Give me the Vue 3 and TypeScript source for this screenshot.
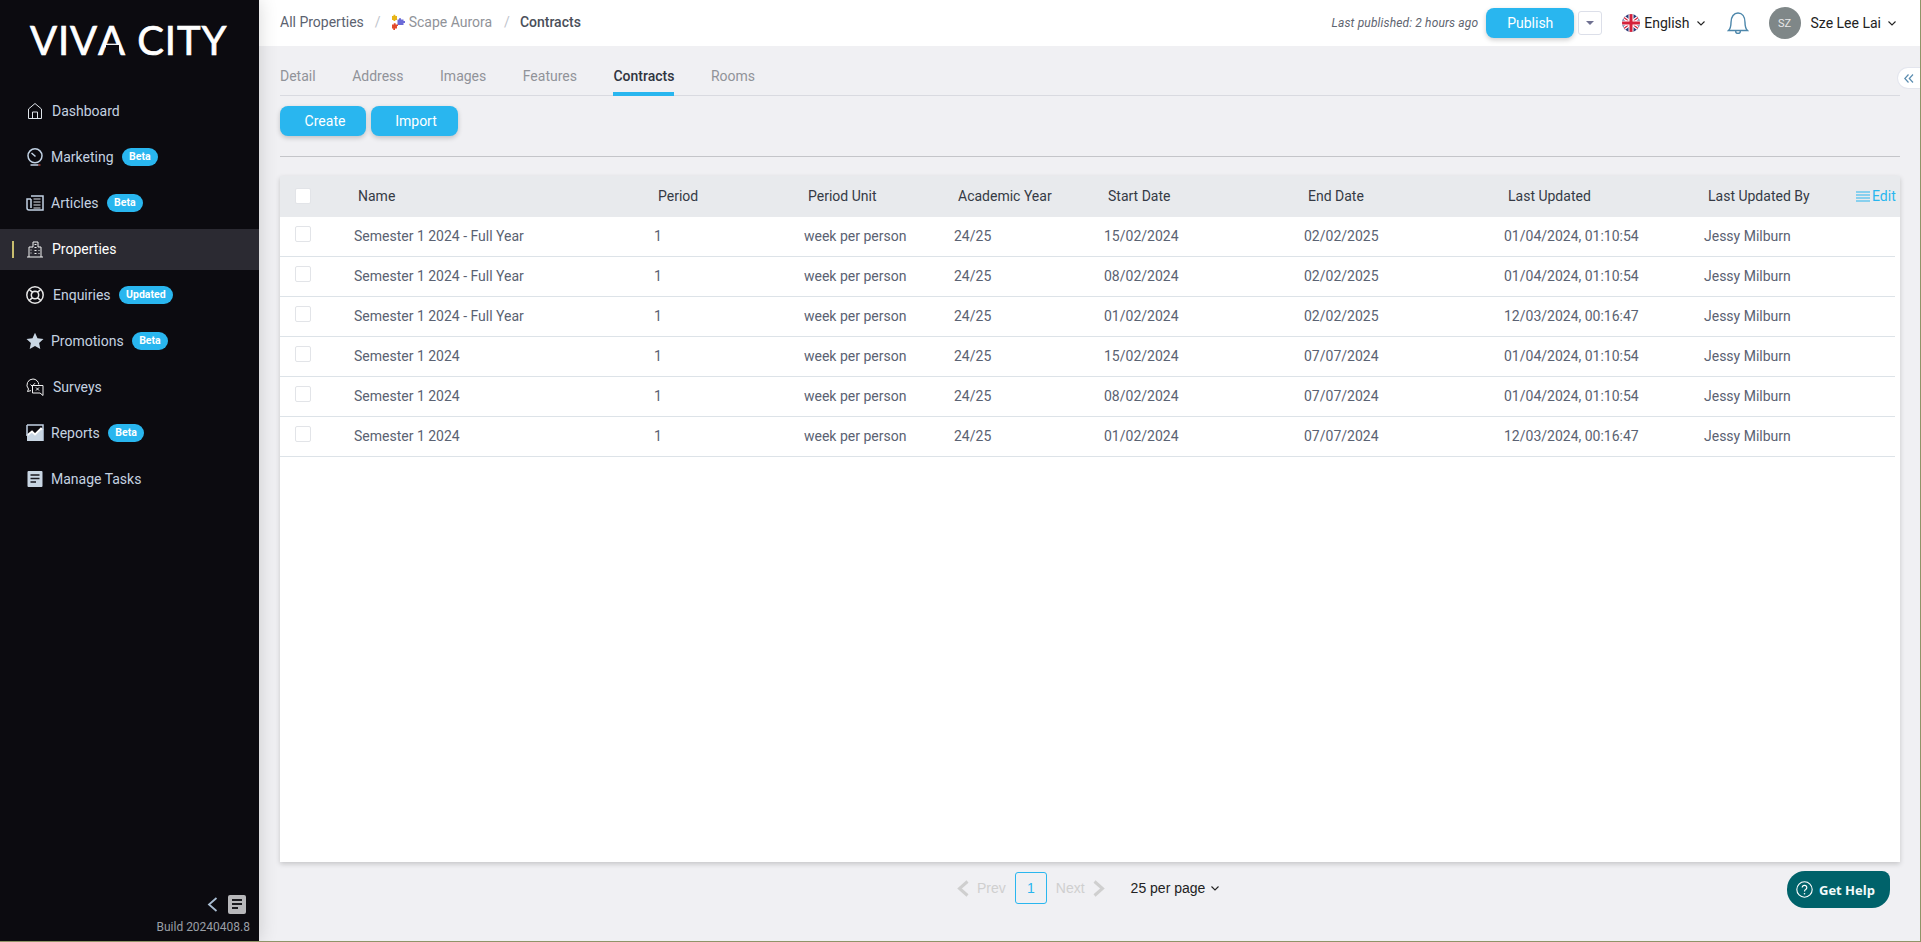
<script setup lang="ts">
interface Part { d: string; c: string }
interface NavItem { label: string; badge?: string; active?: boolean; textOffset: number; parts: Part[] }

const nav: NavItem[] = [
  { label: 'Dashboard', textOffset: 8, parts: [{ c: 's', d: 'M2.5 16.5V7L9 1.5 15.5 7v9.5zM6.5 16.5V10h5v6.5' }] },
  { label: 'Marketing', badge: 'Beta', textOffset: 7, parts: [
    { c: 's2', d: 'M9 .8a7 7 0 1 0 0 14 7 7 0 0 0 0-14zM9.500 8.500 5.500 5M4.500 17h8' },
    { c: 'r', d: 'M12.500 17h2' }] },
  { label: 'Articles', badge: 'Beta', textOffset: 7, parts: [
    { c: 's2', d: 'M5 2h12v14H3a2 2 0 0 1-2-2V5h4M5 5v9' },
    { c: 's', d: 'M7.5 5h7M7.5 8h7M7.5 11h7M7.5 14h7' }] },
  { label: 'Properties', active: true, textOffset: 8, parts: [
    { c: 'w', d: 'M1 17h16M3 17V7h4V2h5v5h3v10M8.5 4.5h2M8.5 7.5h2M4.5 10h1M4.5 13h1M8.5 10.5h2M8.5 13.500h2M12.500 10.500h1M12.500 13.500h1' }] },
  { label: 'Enquiries', badge: 'Updated', textOffset: 9, parts: [
    { c: 'w2', d: 'M9 .8a8.200 8.200 0 1 0 0 16.400A8.200 8.200 0 0 0 9 .8zM9 5.300a3.700 3.700 0 1 0 0 7.400 3.700 3.700 0 0 0 0-7.400zM3.200 3.200l3.200 3.200M14.800 3.200l-3.200 3.200M3.200 14.800l3.200-3.200M14.800 14.800l-3.200-3.200' }] },
  { label: 'Promotions', badge: 'Beta', textOffset: 7, parts: [
    { c: 'f', d: 'M9 .8l2.500 5.500 6 .7-4.400 4 1.200 6L9 14l-5.300 3 1.200-6L.5 7l6-.7z' }] },
  { label: 'Surveys', textOffset: 9, parts: [
    { c: 'w', d: 'M7 1a6 6 0 0 0-4.500 10L1.500 13.500 5 12.600M12.800 6.500A6 6 0 0 0 7 1M6.500 7.500h10.500v10l-3-2.500H6.500zM4.500 6.500l1.700 1.700 2.800-3M10 9.500l3 3M13 9.500l-3 3' }] },
  { label: 'Reports', badge: 'Beta', textOffset: 7, parts: [
    { c: 'f', d: 'M1 17V12l5-4 3 3 6-6 2 1.500V17z' },
    { c: 'l', d: 'M1 11.500l5-4 3 3 6-6 2 1.500' },
    { c: 's2', d: 'M1 12V1M1 1h16v16' }] },
  { label: 'Manage Tasks', textOffset: 7, parts: [
    { c: 'f', d: 'M2.500 1h13a1 1 0 0 1 1 1v14a1 1 0 0 1-1 1h-13a1 1 0 0 1-1-1V2a1 1 0 0 1 1-1z' },
    { c: 'd', d: 'M4.500 5h9M4.500 8.500h9M4.500 12h5.500' }] },
]

const tabs = ['Detail', 'Address', 'Images', 'Features', 'Contracts', 'Rooms']
const columns = ['Name', 'Period', 'Period Unit', 'Academic Year', 'Start Date', 'End Date', 'Last Updated', 'Last Updated By']
const rows: string[][] = [
  ['Semester 1 2024 - Full Year', '1', 'week per person', '24/25', '15/02/2024', '02/02/2025', '01/04/2024, 01:10:54', 'Jessy Milburn'],
  ['Semester 1 2024 - Full Year', '1', 'week per person', '24/25', '08/02/2024', '02/02/2025', '01/04/2024, 01:10:54', 'Jessy Milburn'],
  ['Semester 1 2024 - Full Year', '1', 'week per person', '24/25', '01/02/2024', '02/02/2025', '12/03/2024, 00:16:47', 'Jessy Milburn'],
  ['Semester 1 2024', '1', 'week per person', '24/25', '15/02/2024', '07/07/2024', '01/04/2024, 01:10:54', 'Jessy Milburn'],
  ['Semester 1 2024', '1', 'week per person', '24/25', '08/02/2024', '07/07/2024', '01/04/2024, 01:10:54', 'Jessy Milburn'],
  ['Semester 1 2024', '1', 'week per person', '24/25', '01/02/2024', '07/07/2024', '12/03/2024, 00:16:47', 'Jessy Milburn'],
]
</script>

<template>
  <div class="app">
    <aside class="sidebar">
      <div class="logo"><span class="logo-text">VIV<span class="logo-a">A</span> CITY</span></div>
      <nav class="nav">
        <a v-for="item in nav" :key="item.label" class="nav-item" :class="{ active: item.active }">
          <span class="nav-icon">
            <svg width="18" height="18" viewBox="0 0 18 18">
              <path v-for="(p, i) in item.parts" :key="i" :d="p.d" :class="p.c" />
            </svg>
          </span>
          <span class="nav-label" :style="{ marginLeft: item.textOffset + 'px' }">{{ item.label }}</span>
          <span v-if="item.badge" class="badge">{{ item.badge }}</span>
        </a>
      </nav>
      <div class="side-foot">
        <div class="foot-icons">
          <svg width="11" height="15" viewBox="0 0 11 15"><path d="M9.500 1 2 7.500 9.500 14" fill="none" stroke="#a9bdd2" stroke-width="1.800" /></svg>
          <svg width="18" height="19" viewBox="0 0 18 19">
            <rect width="18" height="19" rx="2" fill="#b7b7ba" />
            <path d="M4 5h10M4 9h10M4 13h6" stroke="#1a1a1e" stroke-width="2" />
          </svg>
        </div>
        <div class="build">Build 20240408.8</div>
      </div>
    </aside>

    <main class="main">
      <header class="topbar">
        <div class="crumbs">
          <span class="crumb-first">All Properties</span>
          <span class="slash">/</span>
          <svg class="puzzle" width="15" height="16" viewBox="0 0 15 16">
            <path d="M2 2h1.500V.8h1.800V2H7v4H5.300v1H3.500V6H2z" fill="#e8b518" />
            <path d="M7.500 5.500H9V4.200h2V5.500h2.500V7H15v2h-1.500v2H7.500z" fill="#6b6bd8" />
            <path d="M2 10.500h1.800V9.300h1.800v1.200H8V12H7v2.500H5V16H3.300v-1.500H2z" fill="#e2492b" />
          </svg>
          <span class="crumb-mid">Scape Aurora</span>
          <span class="slash second">/</span>
          <span class="crumb-last">Contracts</span>
        </div>
        <div class="top-right">
          <span class="published">Last published: 2 hours ago</span>
          <button class="btn publish">Publish</button>
          <span class="drop"><i class="caret"></i></span>
          <svg class="flag" width="18" height="18" viewBox="0 0 18 18">
            <defs><clipPath id="flagclip"><circle cx="9" cy="9" r="9" /></clipPath></defs>
            <g clip-path="url(#flagclip)">
              <rect width="18" height="18" fill="#2b3a78" />
              <path d="M0 2 18 16M18 2 0 16" stroke="#fff" stroke-width="3.500" />
              <path d="M0 2 18 16M18 2 0 16" stroke="#d5213b" stroke-width="1.200" />
              <path d="M9 0v18M0 9h18" stroke="#fff" stroke-width="5" />
              <path d="M9 0v18M0 9h18" stroke="#d5213b" stroke-width="3" />
            </g>
          </svg>
          <span class="lang">English</span>
          <svg class="chev" width="8" height="5" viewBox="0 0 8 5"><path d="M.5.5 4 4 7.500.5" fill="none" stroke="#222" stroke-width="1.100" /></svg>
          <svg class="bell" width="22" height="22" viewBox="0 0 22 22">
            <path d="M1.500 18.500c2-2 2.500-4 2.500-8C4 4.500 7 1 11 1s7 3.500 7 9.500c0 4 .5 6 2.500 8zM8.500 18.500c0 2 1 3 2.500 3s2.500-1 2.500-3" fill="none" stroke="#4d87ab" stroke-width="1.400" />
          </svg>
          <span class="avatar">SZ</span>
          <span class="user">Sze Lee Lai</span>
          <svg class="chev last" width="8" height="5" viewBox="0 0 8 5"><path d="M.5.5 4 4 7.500.5" fill="none" stroke="#222" stroke-width="1.100" /></svg>
        </div>
      </header>

      <section class="content">
        <div class="tabs">
          <span v-for="t in tabs" :key="t" class="tab" :class="{ current: t === 'Contracts' }">{{ t }}</span>
        </div>
        <div class="actions">
          <button class="btn action create">Create</button>
          <button class="btn action import">Import</button>
        </div>
        <div class="rule"></div>
        <div class="card">
          <div class="thead">
            <span class="check head-check"></span>
            <span v-for="c in columns" :key="c" class="th">{{ c }}</span>
            <span class="edit">
              <svg width="14" height="11" viewBox="0 0 14 11"><path d="M0 1h14M0 4h14M0 7h14M0 10h14" stroke="#29b6ef" stroke-width="1.200" /></svg>
              Edit
            </span>
          </div>
          <div v-for="(r, i) in rows" :key="i" class="row">
            <span class="check"></span>
            <span v-for="(v, j) in r" :key="j" class="td">{{ v }}</span>
          </div>
        </div>
        <div class="pager">
          <svg width="12" height="17" viewBox="0 0 12 17"><path d="M10.500 1.500 2.500 8.500l8 7" fill="none" stroke="#cfcfcf" stroke-width="3" /></svg>
          <span class="pg-text prev">Prev</span>
          <span class="pg-box">1</span>
          <span class="pg-text next">Next</span>
          <svg width="12" height="17" viewBox="0 0 12 17"><path d="M1.500 1.500l8 7-8 7" fill="none" stroke="#cfcfcf" stroke-width="3" /></svg>
          <span class="per-page">25 per page</span>
          <svg class="pp-chev" width="8" height="5" viewBox="0 0 8 5"><path d="M.5.5 4 4 7.500.5" fill="none" stroke="#222" stroke-width="1.100" /></svg>
        </div>
      </section>

      <span class="collapse">
        <svg width="10" height="9" viewBox="0 0 10 9"><path d="M4.500.5.800 4.500l3.700 4M9 .5 5.300 4.500 9 8.500" fill="none" stroke="#5b8db0" stroke-width="1.200" /></svg>
      </span>
      <button class="help">
        <svg width="17" height="17" viewBox="0 0 17 17">
          <circle cx="8.500" cy="8.500" r="7.700" fill="none" stroke="#fff" stroke-width="1.100" />
          <path d="M6.200 6.600a2.300 2.300 0 1 1 3.500 2c-.9.500-1.200 1-1.200 1.900" fill="none" stroke="#fff" stroke-width="1.200" />
          <circle cx="8.500" cy="12.700" r=".8" fill="#fff" />
        </svg>
        Get Help
      </button>
    </main>
  </div>
</template>

<style>
html, body { margin: 0; background: #8f9468; }
</style>

<style scoped>
.app {
  display: flex;
  width: 1920px;
  height: 941px;
  overflow: hidden;
  font-family: Roboto, "Liberation Sans", sans-serif;
  font-size: 14px;
}
.sidebar {
  position: relative;
  z-index: 2;
  flex: 0 0 259px;
  display: flex;
  flex-direction: column;
  background: #0c0b10;
  box-shadow: 0 0 18px rgba(0, 0, 0, .16);
}
.logo { height: 91px; padding: 13px 0 0 30px; box-sizing: border-box; }
.logo-text {
  font-family: Lato, sans-serif;
  font-size: 40px;
  line-height: 54px;
  letter-spacing: .9px;
  color: #fff;
  -webkit-text-stroke: .7px #fff;
  white-space: nowrap;
}
.logo-a { position: relative; display: inline-block; }
.logo-a::after {
  content: "";
  position: absolute;
  left: 0;
  right: 0;
  top: 32px;
  height: 10px;
  background: linear-gradient(#0c0b10, #0c0b10) center / 13px 100% no-repeat;
}
.nav { display: flex; flex-direction: column; gap: 5px; }
.nav-item {
  position: relative;
  display: flex;
  align-items: center;
  box-sizing: border-box;
  height: 41px;
  padding: 0 0 2px 26px;
  color: #c5d2e0;
}
.nav-item.active { background: #2b2a32; color: #fff; }
.nav-item.active::before {
  content: "";
  position: absolute;
  left: 12px;
  top: 12px;
  width: 2px;
  height: 17px;
  background: #c8bd6e;
}
.nav-icon { display: flex; width: 18px; height: 18px; }
.nav-icon path { fill: none; }
.nav-icon path.s { stroke: #dfe4ea; stroke-width: 1; }
.nav-icon path.s2 { stroke: #c2d2e4; stroke-width: 1.500; }
.nav-icon path.w { stroke: #f2f2f2; stroke-width: 1; }
.nav-icon path.w2 { stroke: #e6e6e6; stroke-width: 1.500; }
.nav-icon path.r { stroke: #b5473a; stroke-width: 1.400; }
.nav-icon path.f { fill: #c9d6e3; }
.nav-icon path.d { stroke: #1a1a20; stroke-width: 1.600; }
.nav-icon path.l { stroke: #fff; stroke-width: 1.800; }
.nav-label { white-space: nowrap; }
.badge {
  margin-left: 8px;
  padding: 0 7.500px;
  height: 18px;
  line-height: 18px;
  border-radius: 9px;
  background: #29b6ef;
  color: #fff;
  font-size: 10.500px;
  font-weight: 700;
}
.side-foot { margin-top: auto; padding: 0 9px 6px 0; text-align: right; }
.foot-icons { display: flex; justify-content: flex-end; align-items: center; gap: 10px; padding-right: 4px; }
.build { margin-top: 5px; font-size: 12px; line-height: 16px; color: #9a9fa6; }

.main {
  position: relative;
  flex: 1;
  display: flex;
  flex-direction: column;
  background: #f0f0f3;
  min-width: 0;
}
.topbar {
  flex: 0 0 46px;
  display: flex;
  align-items: center;
  justify-content: space-between;
  padding-left: 21px;
  background: #fff;
}
.crumbs { display: flex; align-items: center; padding-bottom: 2px; }
.crumb-first { color: #5b6270; }
.slash { margin-left: 11px; color: #c0c4cc; }
.slash.second { margin-left: 12px; }
.puzzle { margin-left: 9px; }
.crumb-mid { margin-left: 4px; color: #909399; }
.crumb-last { margin-left: 10px; font-weight: 500; color: #4a4f5a; }
.top-right { display: flex; align-items: center; }
.published { font-size: 12px; font-style: italic; color: #5e6470; letter-spacing: .14px; }
.btn {
  border: 0;
  padding: 0;
  border-radius: 8px;
  background: #29b6ef;
  color: #fff;
  font-family: inherit;
  font-size: 14px;
  box-shadow: 0 2px 5px rgba(0, 0, 0, .2);
}
.publish { width: 88px; height: 30px; margin-left: 8px; }
.drop {
  display: flex;
  align-items: center;
  justify-content: center;
  box-sizing: border-box;
  width: 24px;
  height: 24px;
  margin-left: 4px;
  border: 1px solid #dcdfe9;
  border-radius: 3px;
}
.caret {
  width: 0;
  height: 0;
  border: 4px solid transparent;
  border-top: 4px solid #6f7191;
  border-bottom: 0;
}
.flag { margin-left: 20px; }
.lang { margin-left: 4px; color: #222; }
.chev { margin-left: 7px; }
.bell { margin-left: 22px; }
.avatar {
  display: flex;
  align-items: center;
  justify-content: center;
  width: 32px;
  height: 32px;
  margin-left: 20px;
  border-radius: 50%;
  background: #7f8788;
  color: #e8e8e8;
  font-size: 11px;
}
.user { margin-left: 10px; color: #222; }
.chev.last { margin: 0 24px 0 7px; }

.content {
  flex: 1;
  display: flex;
  flex-direction: column;
  padding: 0 20px 0 21px;
  min-height: 0;
}
.tabs {
  display: flex;
  height: 50px;
  box-sizing: border-box;
  gap: 36.500px;
  align-items: flex-start;
  border-bottom: 1px solid #d9dae0;
}
.tab { padding-top: 21px; height: 25px; line-height: 18px; color: #909399; margin-bottom: -1px; }
.tab.current { color: #2f3440; font-weight: 500; border-bottom: 4px solid #29b6ef; }
.actions { display: flex; gap: 5px; margin-top: 10px; }
.action { width: 86px; height: 30px; }
.create { padding-left: 4px; }
.import { width: 87px; padding-left: 3px; }
.rule { margin-top: 20px; height: 1px; background: #c4c5c9; }
.card {
  margin-top: 19px;
  height: 686px;
  flex: none;
  background: #fff;
  box-shadow: 0 2px 5px rgba(0, 0, 0, .18);
}
.thead, .row {
  display: grid;
  grid-template-columns: 74px 300px 150px 150px 150px 200px 200px 200px 1fr;
  align-items: center;
}
.thead {
  position: relative;
  box-sizing: border-box;
  height: 41px;
  padding-bottom: 1px;
  background: #e8eaed;
  color: #353a45;
}
.row {
  height: 40px;
  box-sizing: border-box;
  margin-right: 5px;
  padding-bottom: 2px;
  border-bottom: 1px solid #dde3e8;
  color: #5a6272;
}
.check {
  box-sizing: border-box;
  width: 16px;
  height: 16px;
  margin-left: 15px;
  border: 1px solid #e2e4e8;
  border-radius: 2px;
  background: #fff;
}
.row .check { margin-top: -4px; }
.th { padding-left: 4px; white-space: nowrap; }
.td { white-space: nowrap; }
.edit {
  position: absolute;
  left: 1576px;
  top: 0;
  display: flex;
  align-items: center;
  gap: 2px;
  height: 40px;
  color: #29b6ef;
}
.pager {
  display: flex;
  align-items: center;
  margin: 10px 0 0 677px;
  font-family: "Liberation Sans", Arial, sans-serif;
}
.pg-text { color: #cfcfcf; }
.prev { margin: 0 9px 0 8px; }
.next { margin: 0 8px 0 9px; }
.pg-box {
  box-sizing: border-box;
  width: 32px;
  height: 32px;
  line-height: 30px;
  text-align: center;
  border: 1px solid #29b6ef;
  border-radius: 3px;
  color: #29b6ef;
}
.per-page { margin-left: 26px; color: #222; }
.pp-chev { margin-left: 6px; }
.collapse {
  position: absolute;
  right: 0;
  top: 67px;
  display: flex;
  align-items: center;
  justify-content: center;
  box-sizing: border-box;
  width: 23px;
  height: 22px;
  background: #fff;
  border: 1px solid #e4e6ee;
  border-right: 0;
  border-radius: 11px 0 0 11px;
}
.help {
  position: absolute;
  left: 1528px;
  top: 871px;
  display: flex;
  align-items: center;
  gap: 6px;
  width: 103px;
  height: 37px;
  padding: 0 0 0 9px;
  border: 0;
  border-radius: 18px 8px 18px 18px;
  background: #00626a;
  color: #f2fbfb;
  font-family: "Open Sans", sans-serif;
  font-size: 13px;
  font-weight: 700;
}
</style>
